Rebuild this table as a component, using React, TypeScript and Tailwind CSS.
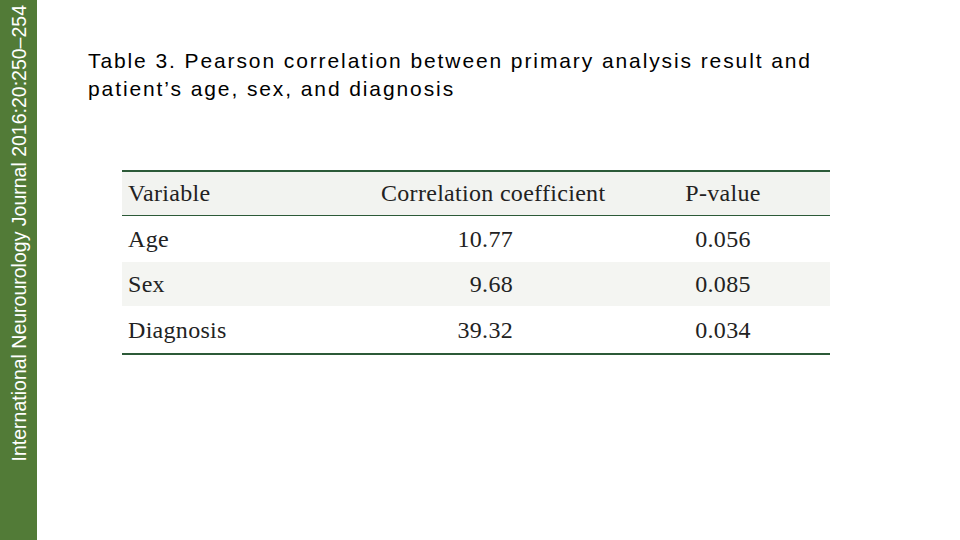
const rows = [
  { name: 'Age', coef: '10.77', p: '0.056', shaded: false, h: 'h-[47px]' },
  { name: 'Sex', coef: '9.68', p: '0.085', shaded: true, h: 'h-[44px]' },
  { name: 'Diagnosis', coef: '39.32', p: '0.034', shaded: false, h: 'h-[48px]' },
];

export default function App() {
  return (
    <div className="flex w-[960px] h-[540px] bg-white overflow-hidden">
      {/* journal sidebar */}
      <div className="w-[37px] h-full shrink-0 bg-[#527b37] flex flex-col justify-end items-center pb-[79px] pl-[3px]">
        <span className="[writing-mode:vertical-rl] rotate-180 text-white text-[19.5px] leading-none whitespace-nowrap font-['Liberation_Sans',Arial,sans-serif]">
          International Neurourology Journal 2016:20:250–254
        </span>
      </div>

      <div className="flex-1 flex flex-col">
        <p className="ml-[51px] mt-[47px] text-[21px] leading-[28px] text-black tracking-[1.9px] font-['Liberation_Sans',Arial,sans-serif]">
          Table 3. Pearson correlation between primary analysis result and
          <br />
          patient’s age, sex, and diagnosis
        </p>

        <table className="ml-[85px] mt-[67px] w-[708px] border-collapse font-['Liberation_Serif','Times_New_Roman',serif] text-[24px] text-[#222] tracking-[0.3px]">
          <thead>
            <tr className="bg-[#f2f3f0] border-t-2 border-b border-[#2c5a38] h-[44px]">
              <th className="text-left font-normal pl-[6px] w-[230px]">Variable</th>
              <th className="text-left font-normal pl-[29px] w-[264px]">Correlation coefficient</th>
              <th className="text-center font-normal">P-value</th>
            </tr>
          </thead>
          <tbody>
            {rows.map((r, i) => (
              <tr
                key={r.name}
                className={`${r.shaded ? 'bg-[#f4f5f2]' : ''} ${i === rows.length - 1 ? 'border-b-2 border-[#2c5a38]' : ''} ${r.h}`}
              >
                <td className="pl-[6px]">{r.name}</td>
                <td className="text-right pr-[103px]">{r.coef}</td>
                <td className="text-center">{r.p}</td>
              </tr>
            ))}
          </tbody>
        </table>
      </div>
    </div>
  );
}
